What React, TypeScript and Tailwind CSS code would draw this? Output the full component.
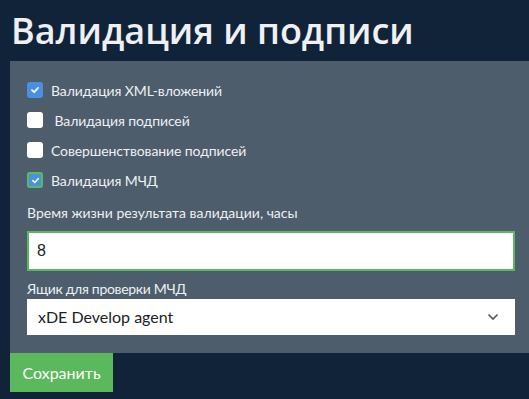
import React from "react";

function Check({ checked, focused }: { checked: boolean; focused?: boolean }) {
  if (checked) {
    return (
      <span
        className={`flex h-4 w-4 items-center justify-center rounded-[3px] bg-[#4a90e2] ${
          focused ? "ring-2 ring-[#5cb85c] ring-inset" : ""
        }`}
      >
        <svg width={focused ? "9" : "10"} height={focused ? "9" : "10"} viewBox="0 0 10 10">
          <path d="M2 5.2 L4.2 7.2 L8 3" fill="none" stroke="white" strokeWidth="1.8" strokeLinecap="round" strokeLinejoin="round" />
        </svg>
      </span>
    );
  }
  return <span className="block h-4 w-4 rounded-[3px] bg-white" />;
}

export default function App() {
  const items = [
    { label: "Валидация XML-вложений", checked: true },
    { label: "\u00a0Валидация подписей", checked: false },
    { label: "Совершенствование подписей", checked: false },
    { label: "Валидация МЧД", checked: true, focused: true },
  ];
  return (
    <div className="h-[399px] w-[529px] overflow-hidden bg-[#102339] pl-[10px]" style={{ fontFamily: "Lato, sans-serif" }}>
      <h1
        className="pl-[1px] pt-[5px] text-[36px] font-semibold leading-[52px] text-[#eef0f3]"
        style={{ fontFamily: "'Open Sans', sans-serif" }}
      >
        Валидация и подписи
      </h1>
      <div className="mt-[4px] h-[292px] bg-[#4d5d6c] pl-[17px] pr-[14px] pt-[21px]">
        <div className="flex flex-col gap-[14px]">
          {items.map((it) => (
            <label key={it.label} className="flex h-4 items-center gap-[8px] text-[14px] tracking-[-0.1px] text-[#eef0f3]">
              <Check checked={it.checked} focused={it.focused} />
              <span>{it.label}</span>
            </label>
          ))}
        </div>
        <div className="mt-[15px] text-[14px] leading-[20px] text-[#eef0f3]">
          Время жизни результата валидации, часы
        </div>
        <div className="mt-[8px] flex h-[40px] items-center border-2 border-[#5cb85c] bg-white pl-[8px] text-[16px] text-[#222]" style={{ fontFamily: "'Liberation Sans', Arial, sans-serif" }}>
          8
        </div>
        <div className="mt-[8px] text-[14px] leading-[20px] tracking-[-0.3px] text-[#eef0f3]">Ящик для проверки МЧД</div>
        <div className="flex h-[36px] items-center justify-between bg-white pl-[11px] pr-[16px] text-[16px] text-[#222]">
          <span>xDE Develop agent</span>
          <svg width="12" height="8" viewBox="0 0 12 8">
            <path d="M1.5 1.5 L6 6 L10.5 1.5" fill="none" stroke="#555" strokeWidth="1.6" />
          </svg>
        </div>
      </div>
      <button className="flex h-[39px] w-[103px] items-center justify-center bg-[#5cb85c] text-[16px] text-white">
        Сохранить
      </button>
    </div>
  );
}
